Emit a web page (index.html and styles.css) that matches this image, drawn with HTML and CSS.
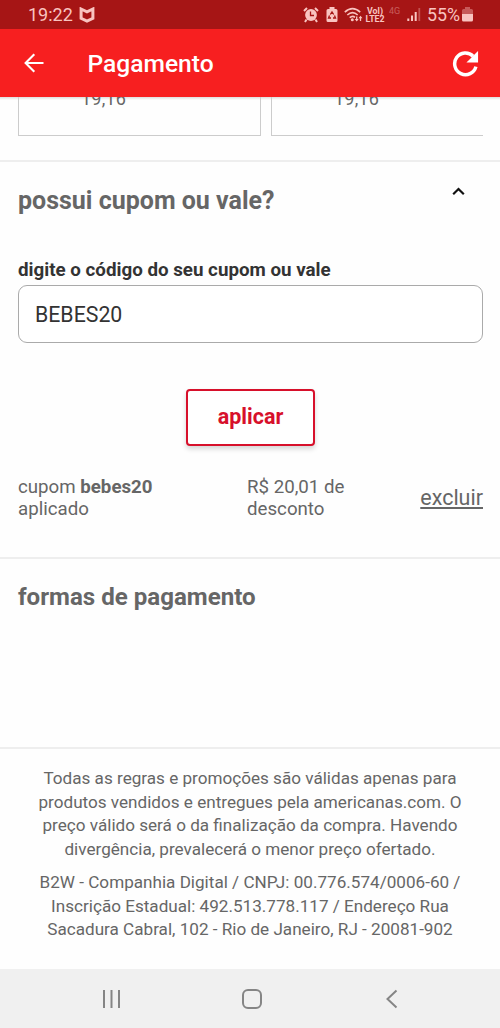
FILE: index.html
```html
<!DOCTYPE html>
<html lang="pt-BR">
<head>
<meta charset="utf-8">
<title>Pagamento</title>
<link rel="stylesheet" href="styles.css">
</head>
<body>
<div class="phone">
  <div class="status">
    <span class="clock">19:22</span>
    <svg class="shield" width="16" height="16" viewBox="0 0 16 16"><path d="M2.1 2 8 4.8 13.900 2V11.300L8 14.200 2.100 11.300Z" fill="none" stroke="currentColor" stroke-width="3"/></svg>
    <div class="indicators">
      <svg width="16" height="16" viewBox="0 0 16 16"><circle cx="8" cy="8" r="5.900" fill="currentColor"/><path d="M1 4 4 1M12 1l3 3M3.500 12.500 2 15M12.500 12.500 14 15" stroke="currentColor" stroke-width="2"/><path d="M7.500 4.500V8.500H11" fill="none" stroke="#a61515" stroke-width="1.300"/></svg>
      <svg class="saver" width="12" height="16" viewBox="0 0 12 16"><path d="M3.500 0h5v2H10q1.500 0 1.500 1.500v10Q11.500 15 10 15H2Q.5 15 .5 13.500v-10Q.5 2 2 2h1.500Z" fill="currentColor"/><path d="M4.300 7.500 6 5l1.700 2.500M8.500 8.500 9.500 11H7M5 11H2.500l1-2.500" fill="none" stroke="#a61515" stroke-width="1.300"/></svg>
      <svg class="wifi" width="19" height="16" viewBox="0 0 19 16"><path d="M.8 5.200q7.700-7 15.400 0M3.300 8q5.200-4.600 10.400 0M5.700 10.700q2.800-2.400 5.300-.4" fill="none" stroke="currentColor" stroke-width="1.600"/><circle cx="8.300" cy="12.700" r="1.500" fill="currentColor"/><path d="M12.700 9.500v4M16.500 14v-4" stroke="currentColor" stroke-width="1.300"/><path d="M10.700 12h4l-2 2.500ZM14.500 11.300h4l-2-2.600Z" fill="currentColor"/></svg>
      <div class="volte"><span>Vo<i>l</i>)</span><span>LTE2</span></div>
      <span class="four">4G</span>
      <svg class="signal" width="14" height="15" viewBox="0 0 14 15"><path d="M1.300 14v-2.500M5 14V8.500M8.700 14V5" stroke="currentColor" stroke-width="2"/><path d="M12.300 14V1" stroke="currentColor" stroke-width="1.800" opacity=".35"/></svg>
      <span class="percent">55%</span>
      <svg class="battery" width="11" height="15" viewBox="0 0 11 15"><path d="M3 0h5v2h1.500Q11 2 11 3.500V7H0V3.500Q0 2 1.500 2H3Z" fill="currentColor" opacity=".4"/><path d="M0 7h11v6q0 1.500-1.500 1.500h-8Q0 14.500 0 13Z" fill="currentColor"/></svg>
    </div>
  </div>
  <header class="bar">
    <svg class="back" width="20" height="20" viewBox="0 0 20 20"><path d="M19.500 10H1.800M10.300 1.300 1.600 10l8.700 8.700" fill="none" stroke="currentColor" stroke-width="2.100"/></svg>
    <h1 class="title">Pagamento</h1>
    <svg class="reload" width="27" height="27" viewBox="0 0 28 28"><path d="M21.900 6.400A11.200 11.200 0 1 0 24.800 17.200" fill="none" stroke="currentColor" stroke-width="3.600"/><path d="M27 1V13H15Z" fill="currentColor"/></svg>
  </header>
  <div class="cards">
    <div class="card">19,16</div>
    <div class="card last">19,16</div>
  </div>
  <section class="coupon">
    <div class="row-head">
      <h2 class="heading question">possui cupom ou vale?</h2>
      <svg class="chevron" width="13" height="9" viewBox="0 0 13 9"><path d="M1.200 7.200 6.500 2l5.300 5.200" fill="none" stroke="#111" stroke-width="2.200"/></svg>
    </div>
    <label class="label" for="code">digite o código do seu cupom ou vale</label>
    <input class="field" id="code" value="BEBES20">
    <button class="apply">aplicar</button>
    <div class="result">
      <p class="applied">cupom <b>bebes20</b><br>aplicado</p>
      <p class="discount">R$ 20,01 de<br>desconto</p>
      <a class="remove">excluir</a>
    </div>
  </section>
  <section class="payment">
    <h2 class="heading">formas de pagamento</h2>
  </section>
  <footer class="legal">
    <p>Todas as regras e promoções são válidas apenas para<br>produtos vendidos e entregues pela americanas.com. O<br>preço válido será o da finalização da compra. Havendo<br>divergência, prevalecerá o menor preço ofertado.</p>
    <p>B2W - Companhia Digital / CNPJ: 00.776.574/0006-60 /<br>Inscrição Estadual: 492.513.778.117 / Endereço Rua<br>Sacadura Cabral, 102 - Rio de Janeiro, RJ - 20081-902</p>
  </footer>
  <nav class="nav">
    <svg width="20" height="20" viewBox="0 0 20 20"><path d="M2 1v18M9.500 1v18M17 1v18" stroke="currentColor" stroke-width="2"/></svg>
    <svg width="20" height="20" viewBox="0 0 20 20"><rect x="1" y="1" width="18" height="18" rx="5" fill="none" stroke="currentColor" stroke-width="2"/></svg>
    <svg width="20" height="20" viewBox="0 0 20 20"><path d="M14.500 1.500 5.500 10l9 8.500" fill="none" stroke="currentColor" stroke-width="2"/></svg>
  </nav>
</div>
</body>
</html>
```
FILE: styles.css
```css
* { box-sizing: border-box; }
body { margin: 0; background: #fefefe; color: #666; font-family: Roboto, sans-serif; }
h1, h2, p { margin: 0; }
svg { display: block; flex: none; }
.phone { width: 500px; height: 1028px; display: flex; flex-direction: column; overflow: hidden; white-space: nowrap; }
.phone > * { flex: none; }
.status { height: 29px; background: #a61515; color: #f9c4c0; display: flex; align-items: center; padding: 0 27px 0 28px; }
.clock { font-size: 18px; line-height: 30px; width: 51px; }
.indicators { margin-left: auto; display: flex; align-items: center; }
.saver { margin-left: 7px; }
.wifi { margin-left: 6px; }
.volte { margin-left: 2px; width: 20px; display: flex; flex-direction: column; align-items: center; font-size: 8.800px; line-height: 8px; font-weight: 700; }
.volte i { font-style: normal; }
.four { margin-left: 4px; width: 12px; font-size: 9px; line-height: 10px; padding-bottom: 7px; opacity: .4; }
.signal { margin-left: 6px; }
.percent { margin-left: 6px; width: 34px; font-size: 17.800px; }
.battery { margin-left: 1px; }
.bar { height: 68px; background: #f71f20; color: #fff; display: flex; align-items: center; padding: 0 20px 0 24px; }
.title { margin-left: 43.500px; font-size: 24.600px; font-weight: 500; line-height: 30px; padding-top: 2px; }
.reload { margin-left: auto; margin-right: 1px; }
.cards { height: 65px; display: flex; gap: 10px; padding-left: 18px; border-bottom: 2px solid #eee; background: linear-gradient(#ddd, #fefefe 3px); }
.card { width: 243px; height: 38.500px; border: 1px solid #ccc; border-top: 0; padding-left: 62px; font-size: 18px; line-height: 4px; letter-spacing: .2px; overflow: hidden; }
.card.last { width: 212px; border-right: 0; }
.coupon { height: 397px; border-bottom: 2px solid #eee; padding: 24px 17px 0 18px; display: flex; flex-direction: column; }
.row-head { display: flex; justify-content: space-between; height: 30px; padding-right: 18px; }
.heading { font-size: 24.100px; line-height: 30px; font-weight: 700; }
.question { font-size: 25px; }
.chevron { margin-top: 1px; }
.label { margin-top: 42px; font-size: 18.750px; line-height: 24px; font-weight: 700; color: #333; }
.field { margin-top: 3px; width: 465px; height: 58px; border: 1px solid #aaa; border-radius: 9px; background: #fff; padding: 0 16px; font: 21.300px Roboto, sans-serif; color: #333; }
.apply { align-self: center; margin-top: 46px; width: 129px; height: 57px; border: 2px solid #d7102b; border-radius: 4px; background: #fff; color: #d7102b; font: 700 21.500px Roboto, sans-serif; padding-bottom: 3px; box-shadow: 0 3px 5px rgba(0,0,0,.16); }
.result { margin-top: 30px; display: flex; font-size: 18.700px; line-height: 22px; }
.applied { width: 229px; }
.remove { margin-left: auto; align-self: center; font-size: 21.500px; line-height: 24px; text-decoration: underline; }
.payment { height: 190px; border-bottom: 2px solid #eee; padding: 23px 18px; }
.legal { height: 220px; padding-top: 18px; text-align: center; font-size: 17.130px; line-height: 23.700px; }
.legal p + p { margin-top: 9px; }
.nav { height: 59px; background: #f0f0f0; color: #858585; display: flex; align-items: center; justify-content: space-between; padding: 0 98px 0 102px; }
```
